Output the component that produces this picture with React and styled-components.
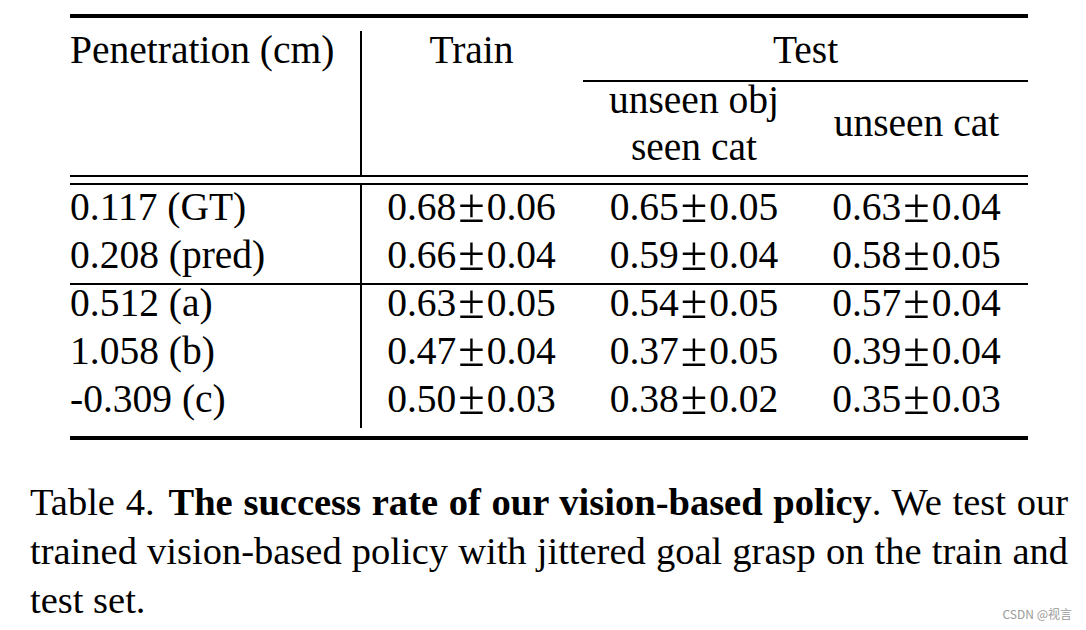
import styled, { createGlobalStyle } from "styled-components";

const GlobalStyle = createGlobalStyle`
  html, body {
    margin: 0;
    padding: 0;
    background: #fff;
  }
  body {
    font-family: "Liberation Serif", "Times New Roman", serif;
    color: #000;
  }
`;

const COLS = "290px 223px 222px 223px";

const Page = styled.div`
  width: 1086px;
  height: 630px;
  overflow: hidden;
  box-sizing: border-box;
  padding-top: 14px;
  display: flex;
  flex-direction: column;
`;

const Tabular = styled.div`
  width: 958px;
  margin-left: 70px;
  display: flex;
  flex-direction: column;
  font-size: 39.5px;
`;

const Rule = styled.div`
  height: ${(p) => p.$h}px;
  background: #000;
`;

const Gap = styled.div`
  height: ${(p) => p.$h}px;
`;

// vertical bar after the first column is drawn as the section background
const Section = styled.div`
  display: grid;
  grid-template-columns: ${COLS};
  grid-template-rows: ${(p) => p.$rows || "none"};
  grid-auto-rows: ${(p) => p.$lh}px;
  row-gap: ${(p) => p.$gap || 0}px;
  padding: ${(p) => p.$pt || 0}px 0 ${(p) => p.$pb || 0}px;
  line-height: ${(p) => p.$lh}px;
  background: linear-gradient(#000, #000) 290px 0 / 2px 100% no-repeat;
`;

const HeadCell = styled.div`
  grid-column: ${(p) => p.$col};
  grid-row: ${(p) => p.$row};
  text-align: ${(p) => (p.$left ? "left" : "center")};
  line-height: 38px;
  white-space: nowrap;
`;

const SubHead = styled.div`
  grid-column: ${(p) => p.$col};
  grid-row: 3;
  align-self: center;
  margin-bottom: 10px;
  text-align: center;
  line-height: 47px;
  white-space: nowrap;
`;

const CMidRule = styled.div`
  grid-column: 3 / 5;
  grid-row: 2;
  background: #000;
`;

const Cell = styled.div`
  text-align: ${(p) => (p.$left ? "left" : "center")};
  white-space: nowrap;
`;

const Pm = styled.span`
  font-size: 1.22em;
  line-height: 0;
  vertical-align: -0.05em;
  margin: 0 2px;
`;

const Caption = styled.div`
  margin: 38px 0 0 30px;
  width: 1038px;
  font-size: 38.5px;
  line-height: 49px;
`;

const CaptionLine = styled.div`
  text-align: justify;
  text-align-last: justify;
`;

const LastLine = styled.div`
  display: flex;
  align-items: baseline;
  justify-content: space-between;
`;

const Watermark = styled.span`
  align-self: flex-end;
  margin: 0 -4px 3px 0;
  font-family: "Noto Sans CJK SC", "Noto Sans", sans-serif;
  font-size: 12px;
  line-height: 16px;
  color: #9a9a9a;
`;

const groupA = [
  ["0.117 (GT)", "0.68±0.06", "0.65±0.05", "0.63±0.04"],
  ["0.208 (pred)", "0.66±0.04", "0.59±0.04", "0.58±0.05"],
];

const groupB = [
  ["0.512 (a)", "0.63±0.05", "0.54±0.05", "0.57±0.04"],
  ["1.058 (b)", "0.47±0.04", "0.37±0.05", "0.39±0.04"],
  ["-0.309 (c)", "0.50±0.03", "0.38±0.02", "0.35±0.03"],
];

function Value({ text }) {
  const [a, b] = text.split("±");
  return (
    <>
      {a}
      <Pm>±</Pm>
      {b}
    </>
  );
}

function Rows({ rows }) {
  return rows.map((r) =>
    r.map((v, i) => (
      <Cell key={r[0] + i} $left={i === 0}>
        {i === 0 ? v : <Value text={v} />}
      </Cell>
    ))
  );
}

export default function App() {
  return (
    <Page>
      <GlobalStyle />
      <Tabular>
        <Rule $h={4} />
        <Gap $h={13} />
        <Section $rows="49px 2px 93px">
          <HeadCell $col="1" $row="1 / 4" $left>
            Penetration (cm)
          </HeadCell>
          <HeadCell $col="2" $row="1 / 4">
            Train
          </HeadCell>
          <HeadCell $col="3 / 5" $row="1">
            Test
          </HeadCell>
          <CMidRule />
          <SubHead $col="3">
            unseen obj
            <br />
            seen cat
          </SubHead>
          <SubHead $col="4">unseen cat</SubHead>
        </Section>
        <Rule $h={2} />
        <Gap $h={6} />
        <Rule $h={2} />
        <Section $lh={44} $gap={4} $pb={6}>
          <Rows rows={groupA} />
        </Section>
        <Rule $h={2} />
        <Section $lh={36} $gap={12} $pb={11}>
          <Rows rows={groupB} />
        </Section>
        <Gap $h={8} />
        <Rule $h={4} />
      </Tabular>
      <Caption>
        <CaptionLine>
          Table 4.{"\u200A"} <b>The success rate of our vision-based policy</b>.
          We test our
        </CaptionLine>
        <CaptionLine>
          trained vision-based policy with jittered goal grasp on the train and
        </CaptionLine>
        <LastLine>
          <span>test set.</span>
          <Watermark>CSDN @视言</Watermark>
        </LastLine>
      </Caption>
    </Page>
  );
}
